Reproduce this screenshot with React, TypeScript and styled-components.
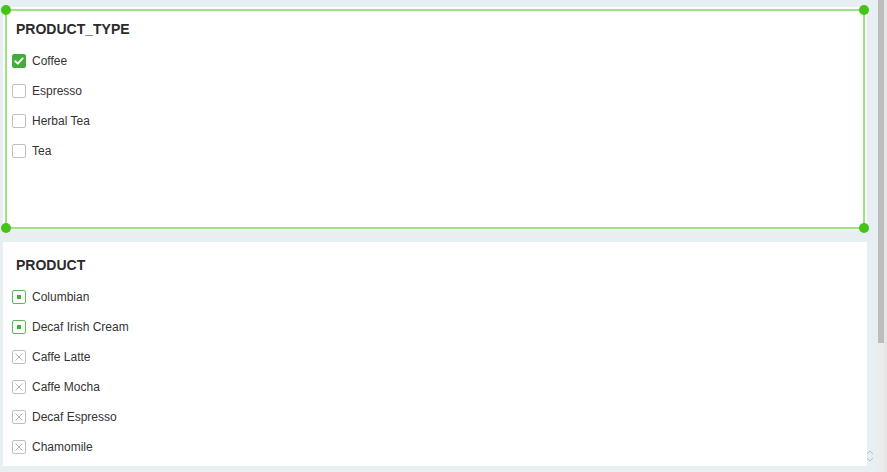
import React from "react";
import styled, { createGlobalStyle } from "styled-components";

const Global = createGlobalStyle`
  html, body { margin: 0; padding: 0; }
  body { font-family: "Liberation Sans", Arial, sans-serif; background: #e8eff3; }
  * { box-sizing: border-box; }
`;

const Page = styled.div`
  position: relative;
  display: flex;
  width: 887px;
  height: 472px;
  overflow: hidden;
  background: #e8eff3;
`;

const Main = styled.div`
  flex: 1;
  display: flex;
  flex-direction: column;
  gap: 12px;
  padding: 7px 11px 6px 3px;
`;

const Panel = styled.section<{ $h: number; $top: number }>`
  position: relative;
  height: ${(p) => p.$h}px;
  background: #ffffff;
  padding: ${(p) => p.$top}px 9px 0 9px;
  display: flex;
  flex-direction: column;
`;

const Title = styled.div`
  font-size: 14px;
  font-weight: 700;
  line-height: 18px;
  color: #2b2b2b;
  margin-left: 4px;
  margin-bottom: 8px;
`;

const List = styled.div`
  display: flex;
  flex-direction: column;
`;

const Row = styled.div`
  display: flex;
  align-items: center;
  gap: 6px;
  height: 30px;
  font-size: 12px;
  color: #333333;
`;

type State = "checked" | "empty" | "partial" | "excluded";

const Box = styled.span<{ $state: State }>`
  position: relative;
  width: 14px;
  height: 14px;
  border-radius: 2px;
  display: inline-flex;
  align-items: center;
  justify-content: center;
  flex: none;
  background: ${(p) => (p.$state === "checked" ? "#3fae3a" : "#ffffff")};
  border: 1px solid
    ${(p) =>
      p.$state === "checked"
        ? "#3fae3a"
        : p.$state === "partial"
        ? "#5cb85c"
        : "#bfbfbf"};
`;

const Dot = styled.span`
  width: 4px;
  height: 4px;
  background: #3fae3a;
`;

const Selection = styled.div`
  position: absolute;
  top: 2px;
  left: 2px;
  right: 2px;
  bottom: 1px;
  border: 2px solid #9de285;
  pointer-events: none;
`;

const Handle = styled.span<{ $x: "left" | "right"; $y: "top" | "bottom" }>`
  position: absolute;
  width: 10px;
  height: 10px;
  border-radius: 50%;
  background: #44c414;
  ${(p) => (p.$x === "left" ? "left: -6px;" : "right: -6px;")}
  ${(p) => (p.$y === "top" ? "top: -6px;" : "bottom: -6px;")}
`;

const ScrollTrack = styled.div`
  width: 9px;
  height: 100%;
  background: #ececec;
  display: flex;
  flex-direction: column;
  border-right: 3px solid #e6e6e6;
`;

const ScrollThumb = styled.div`
  width: 6px;
  height: 343px;
  background: #bdbdbd;
`;

const SortIcon = styled.svg`
  position: absolute;
  left: 866px;
  top: 449px;
`;

const CheckMark = () => (
  <svg width="12" height="12" viewBox="0 0 12 12">
    <path d="M2.3 6.2 L4.8 8.6 L9.6 3.4" fill="none" stroke="#fff" strokeWidth="2" strokeLinecap="round" strokeLinejoin="round" />
  </svg>
);

const Cross = () => (
  <svg width="12" height="12" viewBox="0 0 12 12">
    <path d="M2.5 2.5 L9.5 9.5 M9.5 2.5 L2.5 9.5" fill="none" stroke="#b5b5b5" strokeWidth="1" />
  </svg>
);

const Item = ({ label, state }: { label: string; state: State }) => (
  <Row>
    <Box $state={state}>
      {state === "checked" && <CheckMark />}
      {state === "partial" && <Dot />}
      {state === "excluded" && <Cross />}
    </Box>
    <span>{label}</span>
  </Row>
);

const productTypes: { label: string; state: State }[] = [
  { label: "Coffee", state: "checked" },
  { label: "Espresso", state: "empty" },
  { label: "Herbal Tea", state: "empty" },
  { label: "Tea", state: "empty" },
];

const products: { label: string; state: State }[] = [
  { label: "Columbian", state: "partial" },
  { label: "Decaf Irish Cream", state: "partial" },
  { label: "Caffe Latte", state: "excluded" },
  { label: "Caffe Mocha", state: "excluded" },
  { label: "Decaf Espresso", state: "excluded" },
  { label: "Chamomile", state: "excluded" },
];

export default function App() {
  return (
    <>
      <Global />
      <Page>
        <Main>
          <Panel $h={223} $top={13}>
            <Title>PRODUCT_TYPE</Title>
            <List>
              {productTypes.map((i) => (
                <Item key={i.label} {...i} />
              ))}
            </List>
            <Selection>
              <Handle $x="left" $y="top" />
              <Handle $x="right" $y="top" />
              <Handle $x="left" $y="bottom" />
              <Handle $x="right" $y="bottom" />
            </Selection>
          </Panel>
          <Panel $h={224} $top={14}>
            <Title>PRODUCT</Title>
            <List>
              {products.map((i) => (
                <Item key={i.label} {...i} />
              ))}
            </List>
          </Panel>
        </Main>
        <ScrollTrack>
          <ScrollThumb />
        </ScrollTrack>
        <SortIcon width="8" height="14" viewBox="0 0 8 14">
          <path d="M1 5 L4 2 L7 5 M1 9 L4 12 L7 9" fill="none" stroke="#bdbdbd" strokeWidth="1" />
        </SortIcon>
      </Page>
    </>
  );
}
